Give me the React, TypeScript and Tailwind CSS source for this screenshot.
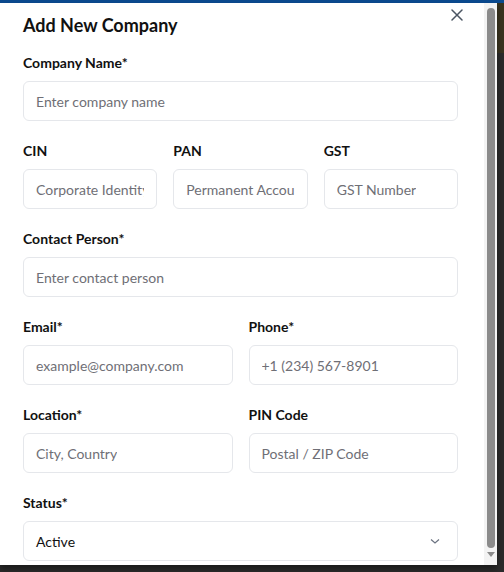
import React from "react";

const font = { fontFamily: 'Lato, "Noto Sans", sans-serif' };

function Field({ label, placeholder }: { label: string; placeholder: string }) {
  return (
    <div className="flex flex-col min-w-0">
      <label className="text-[14px] leading-5 font-bold text-[#111] mb-2">{label}</label>
      <div className="h-10 rounded-md border border-[#e5e7eb] bg-white flex items-center px-3 overflow-hidden">
        <span className="text-[14px] text-[#6f6f76] whitespace-nowrap overflow-hidden">{placeholder}</span>
      </div>
    </div>
  );
}

export default function App() {
  return (
    <div className="w-[504px] h-[572px] bg-[#2b2b2b] flex flex-col overflow-hidden" style={font}>
      <div className="h-[3px] bg-[#0b4a8f] shrink-0" />
      <div className="flex flex-1 min-h-0">
        <div className="w-[497px] h-[562px] bg-white flex shadow-[0_4px_6px_rgba(0,0,0,0.4)] relative">
          <div className="flex-1 pl-[23px] pr-[26px] relative">
            <button className="absolute right-[21px] top-[6px] text-[#4b5563]">
              <svg width="12" height="12" viewBox="0 0 12 12" fill="none" stroke="currentColor" strokeWidth="1.5" strokeLinecap="round">
                <path d="M1 1 L11 11 M11 1 L1 11" />
              </svg>
            </button>
            <h2 className="text-[18px] leading-7 font-bold text-[#111] mt-2 mb-[14px]">Add New Company</h2>
            <div className="flex flex-col gap-5">
              <Field label="Company Name*" placeholder="Enter company name" />
              <div className="grid grid-cols-3 gap-4">
                <Field label="CIN" placeholder="Corporate Identity" />
                <Field label="PAN" placeholder="Permanent Accou" />
                <Field label="GST" placeholder="GST Number" />
              </div>
              <Field label="Contact Person*" placeholder="Enter contact person" />
              <div className="grid grid-cols-2 gap-4">
                <Field label="Email*" placeholder="example@company.com" />
                <Field label="Phone*" placeholder="+1 (234) 567-8901" />
              </div>
              <div className="grid grid-cols-2 gap-4">
                <Field label="Location*" placeholder="City, Country" />
                <Field label="PIN Code" placeholder="Postal / ZIP Code" />
              </div>
              <div className="flex flex-col">
                <label className="text-[14px] leading-5 font-bold text-[#111] mb-2">Status*</label>
                <div className="h-10 rounded-md border border-[#e5e7eb] bg-white flex items-center justify-between px-3">
                  <span className="text-[14px] text-[#111]">Active</span>
                  <svg width="12" height="12" viewBox="0 0 12 12" fill="none" stroke="#6b7280" strokeWidth="1.2" className="mr-[4px]">
                    <path d="M2 4.5 L6 8 L10 4.5" />
                  </svg>
                </div>
              </div>
            </div>
          </div>
          <div className="w-[13px] bg-[#f3f3f3] flex flex-col items-center pt-[5px]">
            <div className="w-[8px] h-[540px] rounded-full bg-[#8b8b8b]" />
            <div className="mt-[4px] w-0 h-0 border-l-[4px] border-r-[4px] border-t-[5px] border-l-transparent border-r-transparent border-t-[#8b8b8b]" />
          </div>
        </div>
        <div className="flex-1 bg-[#2b2b2b] flex flex-col">
          <div className="h-[50px] bg-[#39331f]" />
        </div>
      </div>
    </div>
  );
}
